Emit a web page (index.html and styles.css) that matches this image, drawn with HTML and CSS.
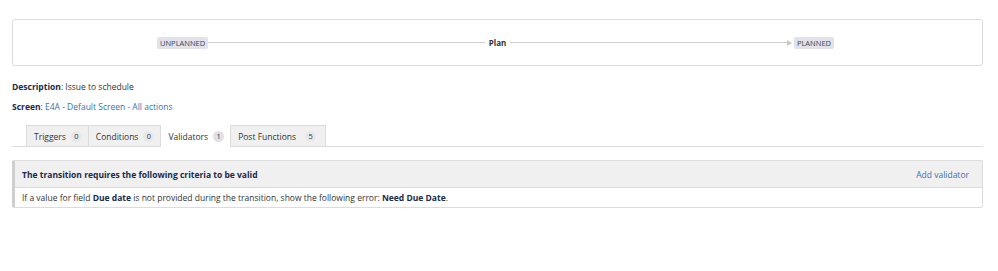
FILE: index.html
```html
<!DOCTYPE html>
<html lang="en">
<head>
    <meta charset="UTF-8">
    <title>Transition: Plan</title>
    <link rel="stylesheet" href="styles.css">
</head>
<body>
    <div class="diagram">
        <span class="status">UNPLANNED</span>
        <span class="line"></span>
        <span class="transition">Plan</span>
        <span class="line"></span>
        <span class="arrow"></span>
        <span class="status">PLANNED</span>
    </div>

    <p class="meta"><b>Description</b>: Issue to schedule</p>
    <p class="meta"><b>Screen</b>: <a href="#">E4A - Default Screen - All actions</a></p>

    <div class="tabs">
        <div class="tab">Triggers <span class="count">0</span></div>
        <div class="tab">Conditions <span class="count">0</span></div>
        <div class="tab active">Validators <span class="count">1</span></div>
        <div class="tab wide">Post Functions <span class="count">5</span></div>
    </div>

    <div class="criteria">
        <div class="criteria-head">
            <span>The transition requires the following criteria to be valid</span>
            <a href="#">Add validator</a>
        </div>
        <div class="criteria-body">
            If a value for field <b>Due date</b> is not provided during the transition, show the following error: <b>Need Due Date</b>.
        </div>
    </div>
</body>
</html>
```

FILE: styles.css
```css
body {
    font-family: "Open Sans", "Noto Sans", sans-serif;
    font-size: 8.5px;
    color: #333;
    margin: 19px 15px 0 12px;
    background: #fff;
}
b {
    color: #172b4d;
    font-weight: 700;
}
a {
    color: #3b73af;
    text-decoration: none;
}
.diagram {
    display: flex;
    align-items: center;
    height: 45px;
    padding: 0 148px 0 144px;
    border: 1px solid #dcdcdc;
    border-radius: 3px;
}
.status {
    background: #e1e3e9;
    color: #344563;
    font-size: 7.5px;
    padding: 1px 3px;
    border-radius: 2px;
    line-height: 10px;
}
.line {
    flex: 1;
    height: 1px;
    background: #d0d0d0;
}
.transition {
    font-weight: 700;
    color: #333;
    font-size: 8px;
    padding: 0 4px;
}
.arrow {
    width: 0;
    height: 0;
    border-left: 5px solid #c8c8c8;
    border-top: 3px solid transparent;
    border-bottom: 3px solid transparent;
    margin-right: 2px;
}
.meta {
    margin: 15px 0 0;
    line-height: 12px;
}
.meta + .meta {
    margin-top: 8px;
}
.tabs {
    display: flex;
    margin-top: 12px;
    padding-left: 14px;
    border-bottom: 1px solid #dcdcdc;
}
.tab {
    display: flex;
    align-items: center;
    gap: 5px;
    height: 20px;
    padding: 0 6px 0 7px;
    background: #f0f0f0;
    border: 1px solid #dcdcdc;
    border-bottom: none;
    border-left: none;
    margin-bottom: -1px;
    color: #333;
}
.tab:first-child {
    border-left: 1px solid #dcdcdc;
}
.tab.wide {
    gap: 9px;
    padding-right: 9px;
}
.tab.active {
    background: #fff;
    height: 21px;
    border-top-color: #fff;
}
.count {
    display: inline-block;
    min-width: 9px;
    padding: 0 1px;
    line-height: 11px;
    text-align: center;
    border-radius: 6px;
    font-size: 7.5px;
    background: #e6e8ec;
    color: #333;
}
.tab.active .count {
    background: #dfe1e6;
}
.criteria {
    margin-top: 13px;
    border: 1px solid #dcdcdc;
    border-left: 3px solid #cfcfcf;
    border-radius: 2px;
}
.criteria-head {
    display: flex;
    justify-content: space-between;
    align-items: center;
    height: 26px;
    padding: 0 13px 0 7px;
    background: #f0f0f0;
    border-bottom: 1px solid #dcdcdc;
    font-weight: 700;
    color: #172b4d;
}
.criteria-head a {
    font-weight: 400;
}
.criteria-body {
    height: 19px;
    line-height: 19px;
    padding: 0 7px;
}
```
